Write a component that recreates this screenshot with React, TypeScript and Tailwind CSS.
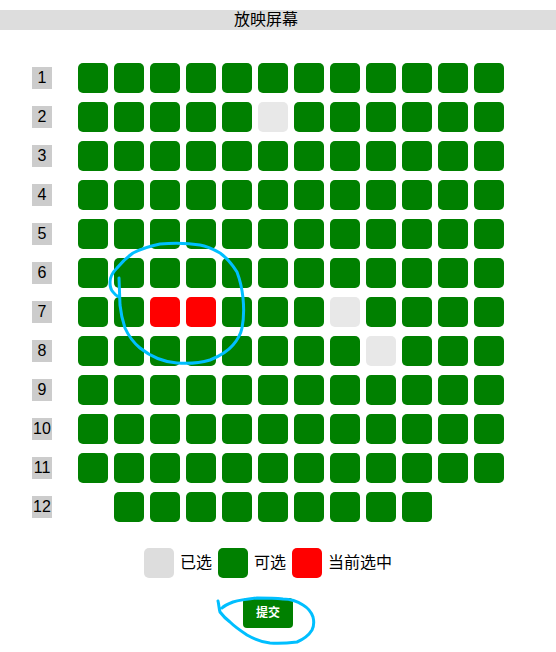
const COLS = 12;

// 0 = empty slot, 1 = available, 2 = sold, 3 = selected
const seatMap: number[][] = Array.from({ length: 12 }, (_, r) =>
  Array.from({ length: COLS }, (_, c) => {
    if (r === 11) return c >= 1 && c <= 9 ? 1 : 0;
    if (r === 1 && c === 5) return 2;
    if (r === 6 && c === 7) return 2;
    if (r === 7 && c === 8) return 2;
    if (r === 6 && (c === 2 || c === 3)) return 3;
    return 1;
  })
);

function Seat({ state }: { state: number }) {
  if (state === 0) return <div className="w-[30px] h-[30px]" />;
  const color =
    state === 2 ? "bg-[#e8e8e8]" : state === 3 ? "bg-[#ff0000]" : "bg-[#008000]";
  return <div className={`w-[30px] h-[30px] rounded-[5px] ${color}`} />;
}

export default function App() {
  return (
    <div
      className="relative w-[556px] h-[652px] bg-white text-black"
      style={{ fontFamily: '"Liberation Sans", "Noto Sans CJK SC", sans-serif' }}
    >
      {/* 屏幕 */}
      <div className="mt-[10px] h-[20px] bg-[#dddddd]">
        <div className="w-[532px] h-full flex items-center justify-center text-[16px] leading-none">
          放映屏幕
        </div>
      </div>

      {/* 座位 */}
      <div className="mt-[33px] pl-[32px] flex flex-col gap-[9px]">
        {seatMap.map((row, r) => (
          <div key={r} className="flex items-center h-[30px]">
            <div className="w-[20px] h-[22px] bg-[#cccccc] flex items-center justify-center text-[16px] leading-none">
              {r + 1}
            </div>
            <div className="ml-[26px] flex gap-[6px]">
              {row.map((s, c) => (
                <Seat key={c} state={s} />
              ))}
            </div>
          </div>
        ))}
      </div>

      {/* 图例 */}
      <div className="w-[536px] mt-[26px] flex flex-col items-center">
        <div className="flex items-center gap-[6px] text-[16px] leading-none">
          <div className="w-[30px] h-[30px] rounded-[5px] bg-[#dddddd]" />
          <span>已选</span>
          <div className="w-[30px] h-[30px] rounded-[5px] bg-[#008000]" />
          <span>可选</span>
          <div className="w-[30px] h-[30px] rounded-[5px] bg-[#ff0000]" />
          <span>当前选中</span>
        </div>
        <button className="mt-[20px] w-[50px] h-[30px] rounded-[4px] bg-[#008000] text-white text-[12px] font-bold leading-none">
          提交
        </button>
      </div>

      {/* 手绘标注 */}
      <svg
        className="absolute inset-0 pointer-events-none"
        width="556"
        height="652"
        viewBox="0 0 556 652"
      >
        <path
          d="M119,268 L120,295 C121,305 123,312 125,318 C129,327 134,333 140,338 C150,346 163,352 177,353 C190,354 200,353 210,350 C220,346 228,341 233,335 C239,328 241,323 242,318 C244,308 244,298 243,288 C242,278 240,270 237,262 C232,254 227,248 220,243 C213,239 207,236 200,235 C187,233 173,233 160,234 C150,236 141,239 133,243 C126,248 121,253 117,258 C112,263 110,268 110,272 C110,277 111,280 113,282 C115,285 117,286 119,287"
          fill="none"
          stroke="#00bfff"
          strokeWidth="3"
          strokeLinecap="round"
          strokeLinejoin="round"
        />
        <path
          d="M218,591 C219,595 219,599 220,602 C223,606 226,609 230,612 C235,617 241,621 247,625 C254,629 262,632 270,633 C280,634 289,633 297,632 C304,629 309,625 312,620 C314,616 314,611 313,607 C311,601 308,598 303,595 C297,591 290,589 283,589 C274,588 265,588 257,588 C248,589 240,590 233,592 C228,594 224,596 222,598"
          fill="none"
          stroke="#00bfff"
          strokeWidth="3"
          strokeLinecap="round"
          strokeLinejoin="round"
        />
      </svg>
    </div>
  );
}
